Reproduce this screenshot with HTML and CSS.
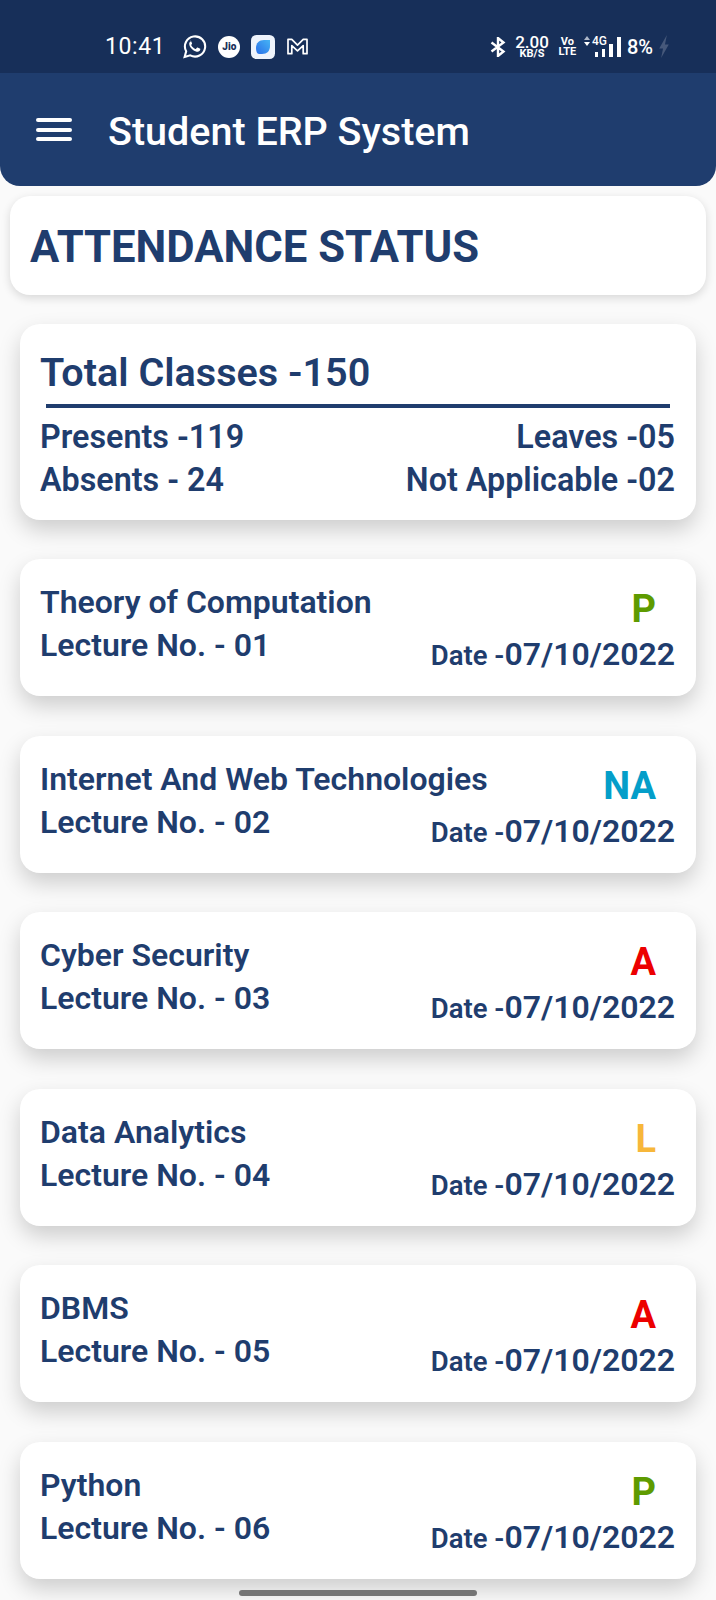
FILE: index.html
```html
<!DOCTYPE html>
<html lang="en">
<head>
<meta charset="utf-8">
<title>Student ERP System</title>
<link rel="stylesheet" href="styles.css">
</head>
<body>
<div class="statusbar">
  <div class="status-left">
    <span class="clock">10:41</span>
    <svg class="ic-wa" viewBox="0 0 24 24" fill="none" stroke="#fff"><path stroke-width="2" d="M2.500 22l1.500-5.400A9.700 9.700 0 1 1 7.900 20.500z"/><path fill="#fff" stroke="none" d="M8.800 6.900c-.3 0-.8.200-1.100.6-.4.500-.9 1.300-.7 2.600.3 1.800 1.500 3.500 3.300 4.900 1.700 1.300 3.500 2 4.800 2 1.200-.1 2.200-.9 2.400-1.800.1-.5.100-.9 0-1l-2.500-1.200c-.3-.1-.5-.1-.7.200l-.8 1c-.2.200-.4.200-.7.100-1.900-.9-3-1.900-3.900-3.500-.1-.2-.1-.4.100-.6l.6-.8c.1-.2.100-.4 0-.6l-1-2.400c-.1-.3-.4-.4-.6-.4z"/></svg>
    <span class="ic-jio">Jio</span>
    <svg class="ic-app" viewBox="0 0 24 24"><defs><linearGradient id="leaf" x1="1" y1="0" x2="0" y2="1"><stop offset="0" stop-color="#46b4f5"/><stop offset="1" stop-color="#2a6fe8"/></linearGradient></defs><rect width="24" height="24" rx="5.500" fill="#eef3fb"/><path fill="url(#leaf)" d="M5 13c0-5 3-8 8-8h6v6c0 5-3 8-8 8H8c-2 0-3-3-3-6z"/></svg>
    <svg class="ic-m" viewBox="0 0 24 20" fill="none" stroke="#fff" stroke-width="1.800"><path stroke-linejoin="round" d="M2 2.500h4l6 6 6-6h4v15h-4V9l-6 5.500L6 9v8.500H2z"/></svg>
  </div>
  <div class="status-right">
    <svg class="ic-bt" viewBox="0 0 16 20" fill="none" stroke="#fff" stroke-width="2.400"><path d="M1.500 5.500l12 9L8 19V1l5.500 4.500-12 9"/></svg>
    <span class="speed"><b>2.00</b><small>KB/S</small></span>
    <span class="volte"><b>Vo</b><b>LTE</b></span>
    <span class="net">
      <span class="signal"><i class="s1"></i><i class="s2"></i><i class="s3"></i><i class="s4"></i></span>
      <span class="net-type"><svg class="arrows" viewBox="0 0 6 10"><path fill="#aeb8c9" d="M3 0l3 4H0z"/><path fill="#fff" d="M0 6h6l-3 4z"/></svg>4G</span>
    </span>
    <span class="batt">8%</span>
    <svg class="ic-bolt" viewBox="0 0 12 24"><path fill="#46587a" d="M9 0L1 14h4L3 24l8-14H7z"/></svg>
  </div>
</div>

<header class="appbar">
  <span class="menu"><i></i><i></i><i></i></span>
  <h1 class="app-title">Student ERP System</h1>
</header>

<section class="title-card"><h2>ATTENDANCE STATUS</h2></section>

<section class="card summary">
  <h3 class="total">Total Classes -150</h3>
  <div class="rule"></div>
  <div class="sum-row"><span>Presents -119</span><span>Leaves -05</span></div>
  <div class="sum-row"><span>Absents - 24</span><span>Not Applicable -02</span></div>
</section>

<main class="list">
  <article class="card lecture">
    <div class="lec-left"><div class="subject">Theory of Computation</div><div class="lec-no">Lecture No. - 01</div></div>
    <div class="lec-right"><div class="mark present">P</div><div class="date"><span class="date-label">Date -</span>07/10/2022</div></div>
  </article>
  <article class="card lecture">
    <div class="lec-left"><div class="subject">Internet And Web Technologies</div><div class="lec-no">Lecture No. - 02</div></div>
    <div class="lec-right"><div class="mark na">NA</div><div class="date"><span class="date-label">Date -</span>07/10/2022</div></div>
  </article>
  <article class="card lecture">
    <div class="lec-left"><div class="subject">Cyber Security</div><div class="lec-no">Lecture No. - 03</div></div>
    <div class="lec-right"><div class="mark absent">A</div><div class="date"><span class="date-label">Date -</span>07/10/2022</div></div>
  </article>
  <article class="card lecture">
    <div class="lec-left"><div class="subject">Data Analytics</div><div class="lec-no">Lecture No. - 04</div></div>
    <div class="lec-right"><div class="mark leave">L</div><div class="date"><span class="date-label">Date -</span>07/10/2022</div></div>
  </article>
  <article class="card lecture">
    <div class="lec-left"><div class="subject">DBMS</div><div class="lec-no">Lecture No. - 05</div></div>
    <div class="lec-right"><div class="mark absent">A</div><div class="date"><span class="date-label">Date -</span>07/10/2022</div></div>
  </article>
  <article class="card lecture">
    <div class="lec-left"><div class="subject">Python</div><div class="lec-no">Lecture No. - 06</div></div>
    <div class="lec-right"><div class="mark present">P</div><div class="date"><span class="date-label">Date -</span>07/10/2022</div></div>
  </article>
</main>
<div class="home-indicator"></div>
</body>
</html>
```
FILE: styles.css
```css
* { box-sizing: border-box; }
html, body { margin: 0; padding: 0; }
body {
  width: 716px;
  height: 1600px;
  overflow: hidden;
  position: relative;
  background: #fafafa;
  font-family: Roboto, "Liberation Sans", sans-serif;
  color: #1f3d6e;
}
.statusbar {
  height: 73px;
  background: #172f59;
  display: flex;
  justify-content: space-between;
  align-items: center;
  padding: 20px 46px 0 105px;
  color: #fff;
}
.status-left, .status-right { display: flex; align-items: center; }
.clock { font-size: 23px; letter-spacing: .6px; margin-right: 17px; }
.ic-wa { width: 25px; height: 25px; margin-right: 11px; }
.ic-jio {
  width: 22px; height: 22px; border-radius: 50%;
  background: #fff; color: #172f59;
  font-size: 10px; font-weight: 900; line-height: 22px; text-align: center;
  margin-right: 11px;
}
.ic-app { width: 24px; height: 24px; margin-right: 11px; }
.ic-m { width: 23px; height: 19px; }
.ic-bt { width: 16px; height: 20px; margin-right: 9px; }
.speed { display: flex; flex-direction: column; align-items: center; margin-right: 11px; }
.speed b { font-size: 17px; font-weight: 500; line-height: 14px; }
.speed small { font-size: 11px; font-weight: 700; line-height: 10px; }
.volte { display: flex; flex-direction: column; align-items: center; width: 15px; margin-right: 9px; }
.volte b { font-size: 11px; font-weight: 700; line-height: 10px; }
.net { position: relative; display: flex; justify-content: flex-end; width: 37px; height: 20px; margin-right: 6px; }
.net-type {
  position: absolute;
  left: 0; top: -1px;
  display: flex; align-items: center;
  font-size: 12px; font-weight: 500; line-height: 11px;
}
.arrows { width: 6px; height: 10px; margin-right: 2px; }
.signal { display: flex; align-items: flex-end; gap: 4px; }
.signal i { width: 3px; background: #fff; display: block; }
.signal .s1 { height: 5px; }
.signal .s2 { height: 8px; }
.signal .s3 { height: 13px; width: 4px; }
.signal .s4 { height: 20px; width: 4px; }
.batt { font-size: 20px; font-weight: 500; margin-right: 5px; }
.ic-bolt { width: 12px; height: 23px; }
.appbar {
  height: 113px;
  background: #1f3d6e;
  border-radius: 0 0 20px 20px;
  display: flex;
  align-items: center;
  padding: 0 0 0 36px;
  gap: 36px;
}
.menu { display: flex; flex-direction: column; gap: 5.500px; width: 36px; }
.menu i { display: block; height: 4px; border-radius: 2px; background: #fff; }
.app-title { margin: 4px 0 0; color: #fff; font-size: 39.500px; font-weight: 500; line-height: 1; }
.title-card {
  margin: 10px 10px 0;
  height: 99px;
  background: #fff;
  border-radius: 20px;
  box-shadow: 0 3px 10px rgba(0,0,0,.14);
  display: flex;
  align-items: center;
  padding: 4px 20px 0;
}
.title-card h2 { margin: 0; font-size: 43.600px; font-weight: 700; line-height: 1; }
.card {
  background: #fff;
  border-radius: 20px;
  box-shadow: 0 10px 22px rgba(0,0,0,.18);
  margin: 0 20px;
}
.summary { margin-top: 29px; height: 196px; padding: 27px 21px 0 20px; }
.total { margin: 0; font-size: 39.600px; font-weight: 600; line-height: 44px; }
.rule { height: 4px; background: #1f3d6e; margin: 9px 5px 8px 6px; }
.sum-row { display: flex; justify-content: space-between; font-size: 32.300px; font-weight: 600; line-height: 43px; }
.list { display: flex; flex-direction: column; gap: 39.500px; margin-top: 39px; }
.lecture {
  height: 137px;
  display: flex;
  padding: 22px 21px 0 20px;
}
.lec-left { flex: 1 1 0; min-width: 0; }
.lec-right { flex: none; display: flex; flex-direction: column; align-items: flex-end; margin-top: 6px; }
.subject, .lec-no { font-size: 32px; font-weight: 600; line-height: 43px; white-space: nowrap; }
.mark { font-size: 38px; font-weight: 700; line-height: 44px; padding-right: 19px; }
.present { color: #5e9b00; }
.na { color: #049ec9; }
.absent { color: #ec0000; }
.leave { color: #f7b73a; }
.date { font-size: 32px; font-weight: 600; line-height: 46px; white-space: nowrap; }
.date-label { font-size: 27.500px; }
.home-indicator {
  position: absolute;
  left: 239px; top: 1590px;
  width: 238px; height: 6px;
  border-radius: 3px;
  background: #757575;
}
```
